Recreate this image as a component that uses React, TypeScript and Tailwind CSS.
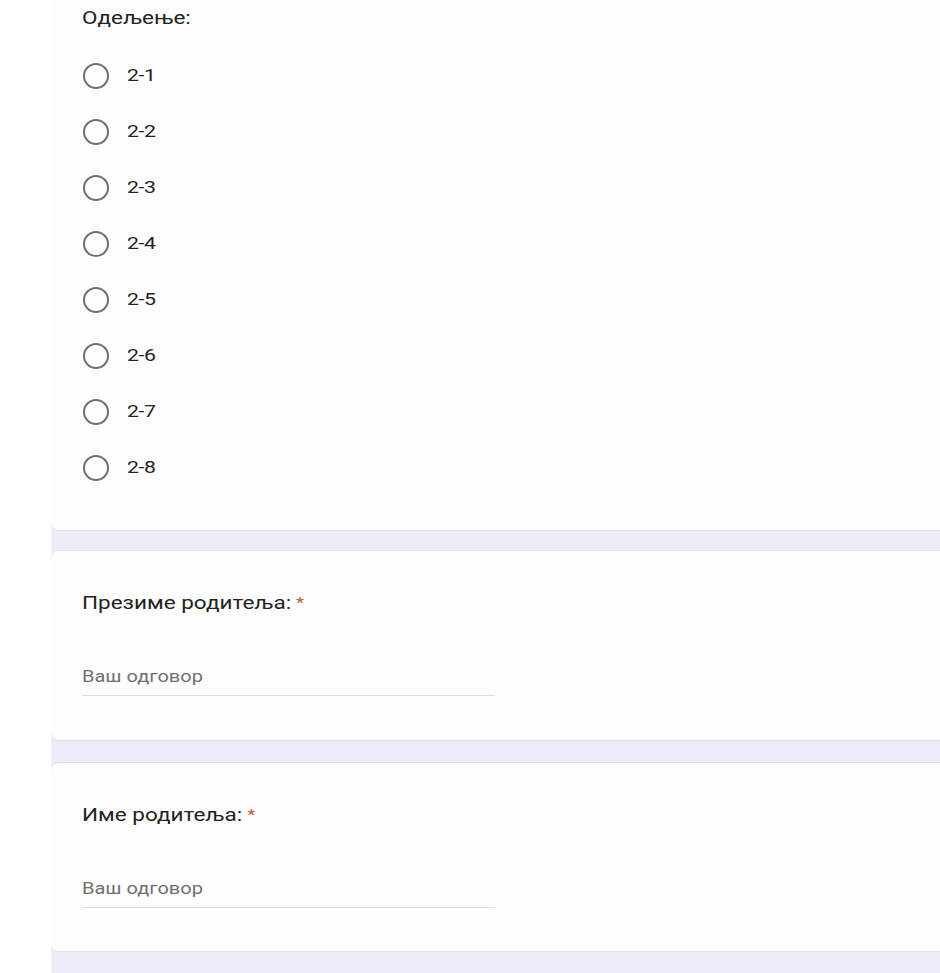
import React from 'react';

const options = ['2-1', '2-2', '2-3', '2-4', '2-5', '2-6', '2-7', '2-8'];

// the source shot is stretched sideways, so text gets a horizontal scale
function Wide({ children, className = '' }: { children: React.ReactNode; className?: string }) {
  return <span className={`inline-block origin-left scale-x-125 whitespace-nowrap ${className}`}>{children}</span>;
}

function Radio({ label }: { label: string }) {
  return (
    <div className="h-[56px] flex items-center">
      <span className="w-[26px] h-[26px] rounded-full border-2 border-[#707070] shrink-0 ml-[1px]" />
      <Wide className="ml-[18px] text-[17px] text-[#222] tracking-[-0.3px]">{label}</Wide>
    </div>
  );
}

function TextQuestion({ title, pad, mt }: { title: string; pad: string; mt: string }) {
  return (
    <div className={`bg-[#fdfdfd] rounded-l-lg border-y border-[#e2e1ea] pl-[31px] ${mt} ${pad}`}>
      <div className="text-[18px] leading-[24px] text-[#222]">
        <Wide>
          {title}
          <span className="text-[#c5534a] text-[15px] ml-[4px] align-top">*</span>
        </Wide>
      </div>
      <div className="mt-[50px] w-[413px] border-b border-[#dedde3] pb-[6px] text-[16px] leading-[24px] text-[#707070]">
        <Wide>Ваш одговор</Wide>
      </div>
    </div>
  );
}

export default function App() {
  return (
    <div className="w-[940px] h-[973px] bg-white overflow-hidden pl-[51px]" style={{ fontFamily: 'Roboto, "Noto Sans", sans-serif' }}>
      <div className="bg-[#ecebf7] h-full">
        <div className="bg-[#fdfdfd] rounded-bl-lg border-b border-[#e2e1ea] pl-[31px] pt-[6px] pb-[34px]">
          <div className="text-[18px] leading-[24px] text-[#222]">
            <Wide>Одељење:</Wide>
          </div>
          <div className="mt-[18px] flex flex-col">
            {options.map((o) => (
              <Radio key={o} label={o} />
            ))}
          </div>
        </div>
        <TextQuestion title="Презиме родитеља:" mt="mt-[19px]" pad="pt-[40px] pb-[44px]" />
        <TextQuestion title="Име родитеља:" mt="mt-[21px]" pad="pt-[40px] pb-[43px]" />
      </div>
    </div>
  );
}
